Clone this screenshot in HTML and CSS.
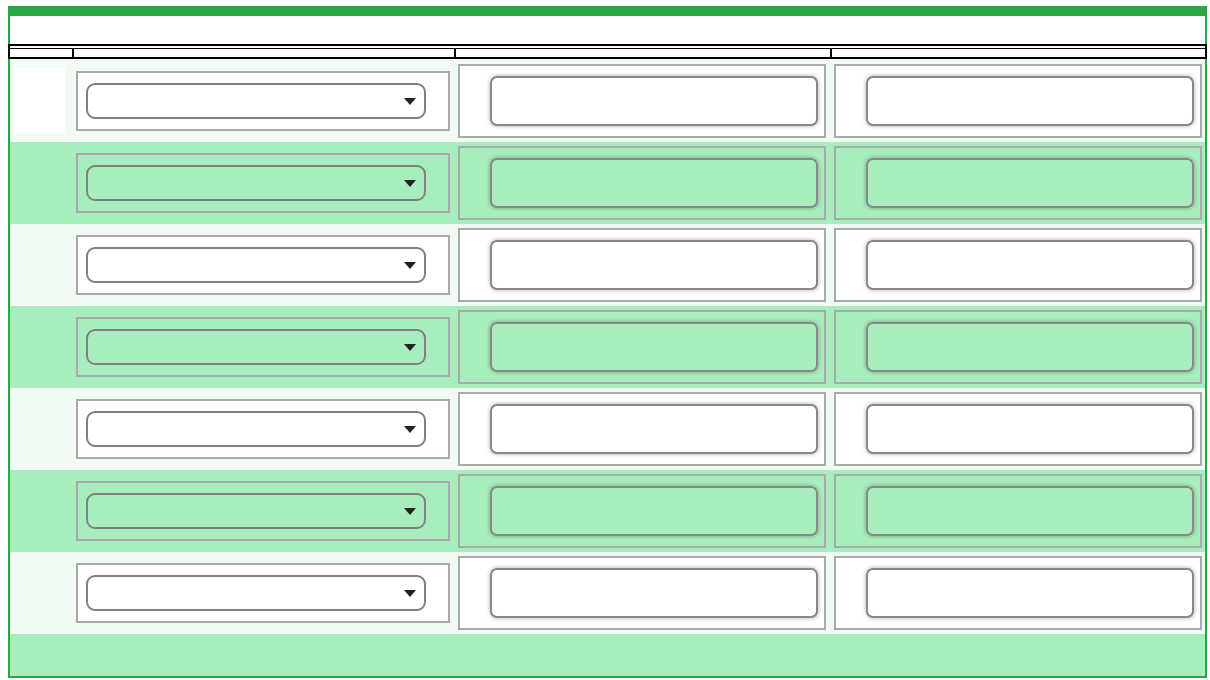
FILE: index.html
```html
<!DOCTYPE html>
<html lang="en">
<head>
    <meta charset="UTF-8">
    <meta name="viewport" content="width=device-width, initial-scale=1.0">
    <title>Entries</title>
    <link rel="stylesheet" href="styles.css">
</head>
<body>
    <div class="sheet">
        <div class="spacer"></div>
        <div class="head">
            <div class="head-cells">
                <div></div>
                <div></div>
                <div></div>
                <div></div>
            </div>
        </div>

        <div class="row first">
            <div class="cell-id"><div class="blank"></div></div>
            <div class="pick-box"><div class="pick-wrap"><select class="pick"></select><span class="arrow"></span></div></div>
            <div class="field-box"><input type="text" class="field"></div>
            <div class="field-box"><input type="text" class="field"></div>
        </div>
        <div class="row alt">
            <div class="cell-id"></div>
            <div class="pick-box"><div class="pick-wrap"><select class="pick"></select><span class="arrow"></span></div></div>
            <div class="field-box"><input type="text" class="field"></div>
            <div class="field-box"><input type="text" class="field"></div>
        </div>
        <div class="row">
            <div class="cell-id"></div>
            <div class="pick-box"><div class="pick-wrap"><select class="pick"></select><span class="arrow"></span></div></div>
            <div class="field-box"><input type="text" class="field"></div>
            <div class="field-box"><input type="text" class="field"></div>
        </div>
        <div class="row alt">
            <div class="cell-id"></div>
            <div class="pick-box"><div class="pick-wrap"><select class="pick"></select><span class="arrow"></span></div></div>
            <div class="field-box"><input type="text" class="field"></div>
            <div class="field-box"><input type="text" class="field"></div>
        </div>
        <div class="row">
            <div class="cell-id"></div>
            <div class="pick-box"><div class="pick-wrap"><select class="pick"></select><span class="arrow"></span></div></div>
            <div class="field-box"><input type="text" class="field"></div>
            <div class="field-box"><input type="text" class="field"></div>
        </div>
        <div class="row alt">
            <div class="cell-id"></div>
            <div class="pick-box"><div class="pick-wrap"><select class="pick"></select><span class="arrow"></span></div></div>
            <div class="field-box"><input type="text" class="field"></div>
            <div class="field-box"><input type="text" class="field"></div>
        </div>
        <div class="row">
            <div class="cell-id"></div>
            <div class="pick-box"><div class="pick-wrap"><select class="pick"></select><span class="arrow"></span></div></div>
            <div class="field-box"><input type="text" class="field"></div>
            <div class="field-box"><input type="text" class="field"></div>
        </div>

        <div class="footer"></div>
    </div>
</body>
</html>
```

FILE: styles.css
```css
body {
    margin: 6px 3px 2px 8px;
    font-family: "Liberation Sans", Arial, sans-serif;
    background: #fff;
}

.sheet {
    border: 2px solid #28a745;
    border-top-width: 10px;
}

.spacer {
    height: 28px;
    background: #fff;
}

/* header lines, drawn over the green frame */
.head {
    margin: 0 -3px 0 -2px;
    border: 2px solid #000;
    border-right-width: 3px;
    padding-top: 2px;
    background: #fff;
}

.head-cells {
    display: grid;
    grid-template-columns: 62px 382px 376px 1fr;
    height: 8px;
    border-top: 1px solid #000;
}

.head-cells div + div {
    border-left: 2px solid #000;
}

.row {
    display: grid;
    grid-template-columns: 64px 382px 376px 1fr;
    align-items: center;
    height: 82px;
    background: #f0fbf4;
}

.row.first {
    height: 83px;
}

.row.alt {
    background: #a8edbd;
}

.cell-id {
    align-self: stretch;
}

.blank {
    width: 50px;
    height: 65px;
    margin: 9px 0 0 5px;
    background: #fff;
}

.pick-box {
    box-sizing: border-box;
    width: 374px;
    height: 60px;
    margin-left: 2px;
    padding: 0 22px 0 8px;
    display: flex;
    align-items: center;
    border: 2px solid #aaa;
    background: #fff;
}

.pick-wrap {
    position: relative;
    width: 340px;
    height: 36px;
}

.pick {
    appearance: none;
    -webkit-appearance: none;
    box-sizing: border-box;
    width: 100%;
    height: 100%;
    margin: 0;
    border: 2px solid #808080;
    border-radius: 9px;
    background: #fff;
}

.arrow {
    position: absolute;
    right: 10px;
    top: 15px;
    width: 0;
    height: 0;
    border-left: 6px solid transparent;
    border-right: 6px solid transparent;
    border-top: 7px solid #222;
}

.field-box {
    box-sizing: border-box;
    width: 368px;
    height: 74px;
    margin-left: 2px;
    padding: 0 6px 0 30px;
    display: flex;
    align-items: center;
    border: 2px solid #aaa;
    background: #fff;
}

.field {
    box-sizing: border-box;
    width: 328px;
    height: 50px;
    margin: 0;
    border: 2px solid #888;
    border-radius: 7px;
    background: #fff;
    box-shadow: 0 0 4px rgba(0, 0, 0, 0.35);
}

.row.alt .pick-box,
.row.alt .pick,
.row.alt .field-box,
.row.alt .field {
    background: transparent;
}

.footer {
    height: 42px;
    background: #a8edbd;
}
```
